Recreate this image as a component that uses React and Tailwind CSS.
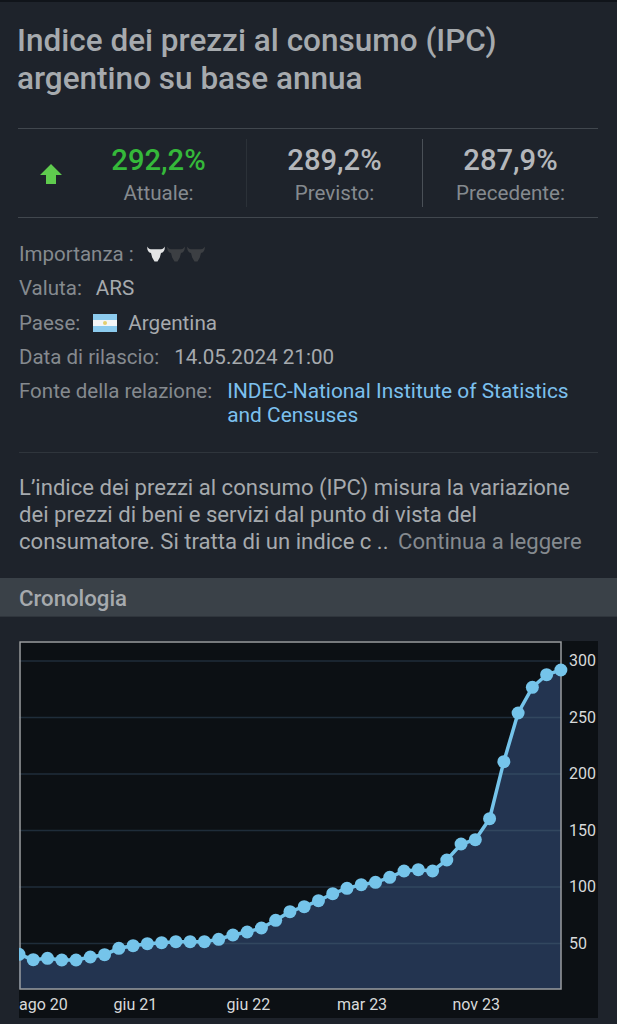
import React from 'react';

const values = [
  954.3, 959.7, 958.3, 960, 960, 957, 954.7, 948.3, 945.7, 943.7, 942.7, 941.7, 941.7,
  941.7, 939.3, 935, 932, 928, 920.3, 911.7, 906.7, 900.7, 893.7, 888.3, 884.7,
  882.3, 877.3, 871, 869.7, 871, 860, 844, 839.7, 818.7, 761.7, 713, 687.3, 674.7, 670,
];

// chart svg starts at page x=19, y=641
const points = values.map((y, i) => [14.26 * i, y - 641]);
const line = points.map(([x, y]) => `${x.toFixed(1)},${y.toFixed(1)}`).join(' ');
const area = `0,348 ${line} 542,348`;
const yTicks = [
  ['300', 20],
  ['250', 76.5],
  ['200', 133],
  ['150', 189.5],
  ['100', 246],
  ['50', 302.5],
];
const xTicks = [
  ['ago 20', 0],
  ['giu 21', 94.5],
  ['giu 22', 207.5],
  ['mar 23', 318],
  ['nov 23', 433.5],
];

const Bull = ({ color }) => (
  <svg width="18" height="16" viewBox="0 0 18 16" fill={color}>
    <path d="M0.3 0.5 C0.8 2 2 3 4 3.2 L14 3.2 C16 3 17.2 2 17.7 0.5 C18.2 4 16.6 6.6 14 7 L12.8 11.5 L10.5 15.5 L7.5 15.5 L5.2 11.5 L4 7 C1.4 6.6 -0.2 4 0.3 0.5 Z" />
  </svg>
);

const Stat = ({ value, label, border }) => (
  <div className={`flex-1 h-[68px] pt-[5px] flex flex-col items-center ${border}`}>
    <span className="text-[29.2px] leading-[33px] font-medium text-[#b4b7bb]">{value}</span>
    <span className="text-[20.6px] leading-[33px] text-[#858a8f]">{label}</span>
  </div>
);

const App = () => {
  return (
    <div className="w-[617px] h-[1024px] overflow-hidden bg-[#1e232b] font-['Roboto',sans-serif] flex flex-col border-t-2 border-[#10141a]">
      <div className="pl-[18px] pr-[19px] pt-[20px]">
        <h1 className="-ml-px text-[31.5px] leading-[38px] font-medium text-[#a6aaae] whitespace-nowrap">
          Indice dei prezzi al consumo (IPC)
          <br />
          argentino su base annua
        </h1>

        <div className="mt-[30px] h-[90px] border-y border-[#41474e] flex items-center">
          <div className="w-[53px] pl-[22px] flex">
            <svg width="22" height="20" viewBox="0 0 22 20" className="mt-[2px]">
              <path d="M11 0 L22 11 L16 11 L16 20 L6 20 L6 11 L0 11 Z" fill="#5fcb4e" />
            </svg>
          </div>
          <div className="w-[176px] h-[68px] pt-[5px] flex flex-col items-center border-r border-[#2b3138]">
            <span className="text-[29.2px] leading-[33px] font-medium text-[#35b93a]">292,2%</span>
            <span className="text-[20.6px] leading-[33px] text-[#858a8f]">Attuale:</span>
          </div>
          <Stat value="289,2%" label="Previsto:" border="border-r border-[#4a5057]" />
          <Stat value="287,9%" label="Precedente:" border="" />
        </div>
      </div>

      <div className="px-[19px] pt-[19px] text-[20.5px] text-[#858a8f]">
        <div className="h-[34.5px] flex items-center">
          <span>Importanza :</span>
          <div className="ml-[13px] -mt-[1px] flex gap-[2px]">
            <Bull color="#e4e5e6" />
            <Bull color="#3c3f43" />
            <Bull color="#3c3f43" />
          </div>
        </div>
        <div className="h-[34.5px] flex items-center">
          <span>Valuta:</span>
          <span className="ml-[14px] text-[20.7px] text-[#a6aaae]">ARS</span>
        </div>
        <div className="h-[34.5px] flex items-center">
          <span>Paese:</span>
          <svg width="24" height="18" viewBox="0 0 24 18" className="ml-[13px]">
            <rect width="24" height="18" fill="#8ccbee" />
            <rect y="6" width="24" height="6" fill="#f4f6f7" />
            <circle cx="12" cy="9" r="2" fill="#e3cf6f" />
          </svg>
          <span className="ml-[11px] text-[20.7px] text-[#a6aaae]">Argentina</span>
        </div>
        <div className="h-[34.5px] flex items-center">
          <span>Data di rilascio:</span>
          <span className="ml-[15px] text-[20.6px] text-[#a6aaae]">14.05.2024 21:00</span>
        </div>
        <div className="flex pt-[4px]">
          <span className="leading-[24px]">Fonte della relazione:</span>
          <span className="ml-[15px] w-[350px] text-[20.9px] leading-[24px] text-[#7cc0ee]">
            INDEC-National Institute of Statistics and Censuses
          </span>
        </div>
      </div>

      <div className="mx-[19px] mt-[25px] border-t border-[#2f353c] pt-[21px] pb-[23px] w-[579px]">
        <p className="text-[22.1px] leading-[27px] text-[#a6aaae] whitespace-nowrap">
          L’indice dei prezzi al consumo (IPC) misura la variazione
          <br />
          dei prezzi di beni e servizi dal punto di vista del
          <br />
          consumatore. Si tratta di un indice c ..{' '}
          <span className="ml-[4px] text-[#858a8f]">Continua a leggere</span>
        </p>
      </div>

      <div className="h-[39px] bg-[#3a4148] flex items-center px-[19px] border-b border-[#2f353c]">
        <span className="text-[22.2px] leading-[39px] pt-[2px] font-medium text-[#a6aaae]">Cronologia</span>
      </div>

      <div className="px-[19px] pt-[24px]">
        <svg width="579" height="377" viewBox="0 0 579 377" className="block bg-[#0c1014]">
          <defs>
            <clipPath id="areaClip">
              <polygon points={area} />
            </clipPath>
          </defs>
          {yTicks.map(([label, y]) => (
            <line key={label} x1="0" x2="542" y1={y} y2={y} stroke="#1f2d3a" strokeWidth="1.5" />
          ))}
          <polygon points={area} fill="#233450" />
          <g clipPath="url(#areaClip)">
            {yTicks.map(([label, y]) => (
              <line key={label} x1="0" x2="542" y1={y} y2={y} stroke="#32475f" strokeWidth="1.5" />
            ))}
          </g>
          <rect x="1" y="1" width="541" height="347" fill="none" stroke="#9a9da0" strokeWidth="1.5" />
          <polyline points={line} fill="none" stroke="#75c4ea" strokeWidth="3.5" />
          {points.map(([x, y], i) => (
            <circle key={i} cx={x} cy={y} r="6.5" fill="#75c4ea" />
          ))}
          {yTicks.map(([label, y]) => (
            <text key={label} x="550" y={y + 5} fontSize="16" fill="#d8dadb">
              {label}
            </text>
          ))}
          {xTicks.map(([label, x]) => (
            <text key={label} x={x} y="369" fontSize="16" fill="#d8dadb">
              {label}
            </text>
          ))}
        </svg>
      </div>
    </div>
  );
};

export default App;
